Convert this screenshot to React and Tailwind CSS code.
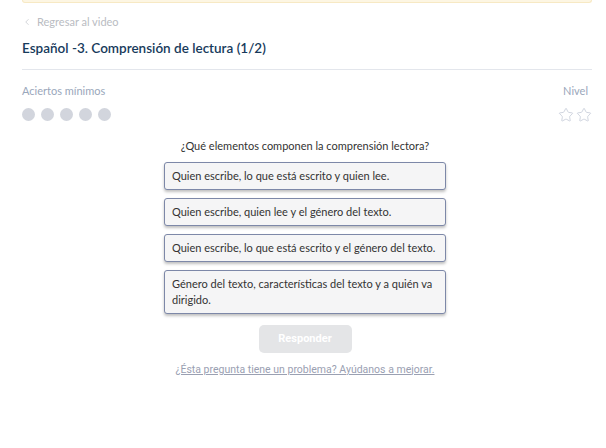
import { ChevronLeft, Star } from "lucide-react";

const options = [
  "Quien escribe, lo que está escrito y quien lee.",
  "Quien escribe, quien lee y el género del texto.",
  "Quien escribe, lo que está escrito y el género del texto.",
  "Género del texto, características del texto y a quién va dirigido.",
];

export default function App() {
  return (
    <div className="min-h-[448px] w-[606px] bg-white font-['Lato',sans-serif]">
      <div className="ml-[22px] mr-[14px]">
        {/* top notice edge */}
        <div className="h-[3px] rounded-b-sm border-x border-b border-[#f7e9c4] bg-[#fdf6e3]" />

        {/* Back link */}
        <div className="mt-[11px] flex items-center gap-[5px] text-[11px] text-[#b9bcc2]">
          <ChevronLeft size={10} strokeWidth={1.5} />
          <span>Regresar al video</span>
        </div>

        <h1 className="mt-[7px] text-[13.5px] font-semibold text-[#173a5b]">
          Español -3. Comprensión de lectura (1/2)
        </h1>

        <div className="mt-[11px] h-px bg-[#e3e6ec]" />

        {/* Stats */}
        <div className="mt-[13px] flex items-start justify-between">
          <div>
            <div className="text-[11px] text-[#9aa7bb]">Aciertos mínimos</div>
            <div className="mt-[9px] flex gap-[6px]">
              {[0, 1, 2, 3, 4].map((i) => (
                <span key={i} className="h-[13px] w-[13px] rounded-full bg-[#d2d5dd]" />
              ))}
            </div>
          </div>
          <div className="flex flex-col items-end">
            <div className="mr-[4px] text-[11px] text-[#9aa7bb]">Nivel</div>
            <div className="mt-[8px] flex gap-[2px] text-[#c9ceda]">
              <Star size={16} strokeWidth={1.3} />
              <Star size={16} strokeWidth={1.3} />
            </div>
          </div>
        </div>
      </div>

      {/* Question */}
      <div className="ml-[22px] mr-[18px] mt-[15px] flex flex-col items-center">
        <p className="text-[11px] text-[#333]">¿Qué elementos componen la comprensión lectora?</p>

        <div className="mt-[7px] flex w-[282px] flex-col gap-[8px]">
          {options.map((opt) => (
            <button
              key={opt}
              className="min-h-[28px] rounded-[3px] border border-[#7d88a8] bg-[#f5f5f6] px-[7px] py-[5px] text-left text-[11px] leading-[16px] text-[#333] shadow-[0_2px_3px_rgba(0,0,0,0.25)]"
            >
              {opt}
            </button>
          ))}
        </div>

        <button className="mt-[11px] h-[28px] w-[93px] rounded-[5px] bg-[#e4e5e7] font-['Roboto',sans-serif] text-[11px] font-bold text-white">
          Responder
        </button>

        <a href="#" className="mt-[9px] font-['Roboto',sans-serif] text-[10.5px] text-[#9aa0b2] underline">
          ¿Ésta pregunta tiene un problema? Ayúdanos a mejorar.
        </a>
      </div>
    </div>
  );
}
